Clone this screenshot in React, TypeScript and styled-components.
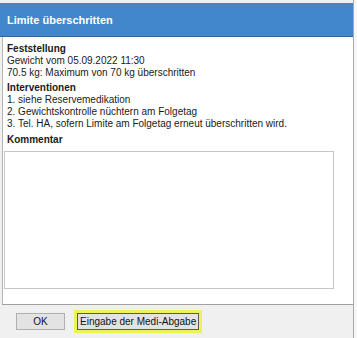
import React from "react";
import styled, { createGlobalStyle } from "styled-components";

const GlobalStyle = createGlobalStyle`
  body {
    margin: 0;
    background: #f7f7f7;
    font-family: "Liberation Sans", Arial, sans-serif;
  }
`;

const Dialog = styled.div`
  width: 354px;
  height: 338px;
  box-sizing: border-box;
  padding-top: 3px;
  display: flex;
  flex-direction: column;
  background: #f0f0f0;
  border-right: 1px solid #a9a9a9;
`;

const Header = styled.div`
  height: 34px;
  flex-shrink: 0;
  box-sizing: border-box;
  display: flex;
  align-items: center;
  padding-left: 7px;
  background: #4287cb;
  border-bottom: 1px solid #2f66a0;
  color: #fff;
  font-size: 11px;
  font-weight: bold;
`;

const Body = styled.div`
  flex: 1;
  margin-left: 2px;
  padding: 6px 0 0 4px;
  background: #fff;
  border-left: 1px solid #b4b4b4;
  border-bottom: 1px solid #a0a0a0;
  font-size: 10px;
  line-height: 12px;
  color: #1a1a1a;
`;

const Heading = styled.div<{ $gap?: number }>`
  font-weight: bold;
  margin-top: ${(p) => p.$gap ?? 0}px;
`;

const Line = styled.div``;

const Comment = styled.div`
  width: 330px;
  height: 138px;
  box-sizing: border-box;
  margin: 5px 0 0 -3px;
  border: 1px solid #c6c6c6;
  background: #fff;
`;

const Footer = styled.div`
  height: 33px;
  flex-shrink: 0;
  display: flex;
  align-items: center;
  padding-left: 16px;
  gap: 12px;
`;

const Button = styled.button<{ $focused?: boolean }>`
  height: 17px;
  box-sizing: border-box;
  padding: 0 2px;
  border: 1px solid ${(p) => (p.$focused ? "#5a5a5a" : "#b0b0b0")};
  background: #e3e3e3;
  font-family: "Liberation Sans", Arial, sans-serif;
  font-size: 10px;
  color: #111;
  box-shadow: ${(p) => (p.$focused ? "0 0 0 3px #eef25a" : "none")};
`;

const OkButton = styled(Button)`
  width: 49px;
`;

const App = () => (
  <>
    <GlobalStyle />
    <Dialog>
      <Header>Limite überschritten</Header>
      <Body>
        <Heading>Feststellung</Heading>
        <Line>Gewicht vom 05.09.2022 11:30</Line>
        <Line>70.5 kg: Maximum von 70 kg überschritten</Line>
        <Heading $gap={3}>Interventionen</Heading>
        <Line>1. siehe Reservemedikation</Line>
        <Line>2. Gewichtskontrolle nüchtern am Folgetag</Line>
        <Line>3. Tel. HA, sofern Limite am Folgetag erneut überschritten wird.</Line>
        <Heading $gap={4}>Kommentar</Heading>
        <Comment />
      </Body>
      <Footer>
        <OkButton>OK</OkButton>
        <Button $focused>Eingabe der Medi-Abgabe</Button>
      </Footer>
    </Dialog>
  </>
);

export default App;
